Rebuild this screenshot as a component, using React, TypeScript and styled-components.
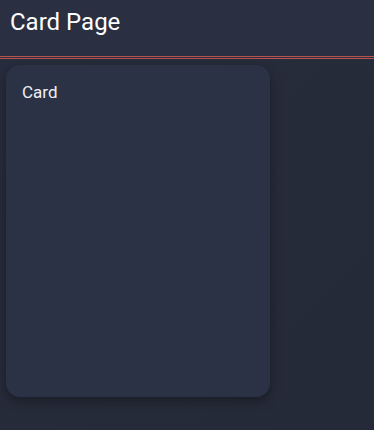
import React from "react";
import styled, { createGlobalStyle } from "styled-components";

const Global = createGlobalStyle`
  html, body { margin: 0; padding: 0; height: 100%; }
  body {
    background: linear-gradient(135deg, #282d3d 0%, #252a38 100%);
    font-family: Roboto, "Noto Sans", sans-serif;
    color: #f2f3f6;
  }
  #root { min-height: 100vh; }
`;

const Page = styled.div`
  min-height: 100vh;
  display: flex;
  flex-direction: column;
`;

const Header = styled.header`
  height: 56px;
  box-sizing: border-box;
  display: flex;
  align-items: flex-start;
  padding: 8px 10px 0;
  background: #2a3041;
  border-bottom: 3px double #b9514c;
  box-sizing: content-box;
  height: 48px;
`;

const Title = styled.h1`
  margin: 0;
  font-size: 24px;
  line-height: 28px;
  font-weight: 400;
  color: #ffffff;
`;

const Content = styled.main`
  padding: 6px;
`;

const Card = styled.section`
  width: 264px;
  height: 332px;
  box-sizing: border-box;
  padding: 16px;
  border-radius: 14px;
  background: #2c3246;
  box-shadow: 0 4px 12px rgba(0, 0, 0, 0.35);
`;

const CardTitle = styled.div`
  font-size: 17px;
  color: #eef0f4;
  margin-top: 1px;
`;

export default function App() {
  return (
    <>
      <Global />
      <Page>
        <Header>
          <Title>Card Page</Title>
        </Header>
        <Content>
          <Card>
            <CardTitle>Card</CardTitle>
          </Card>
        </Content>
      </Page>
    </>
  );
}
